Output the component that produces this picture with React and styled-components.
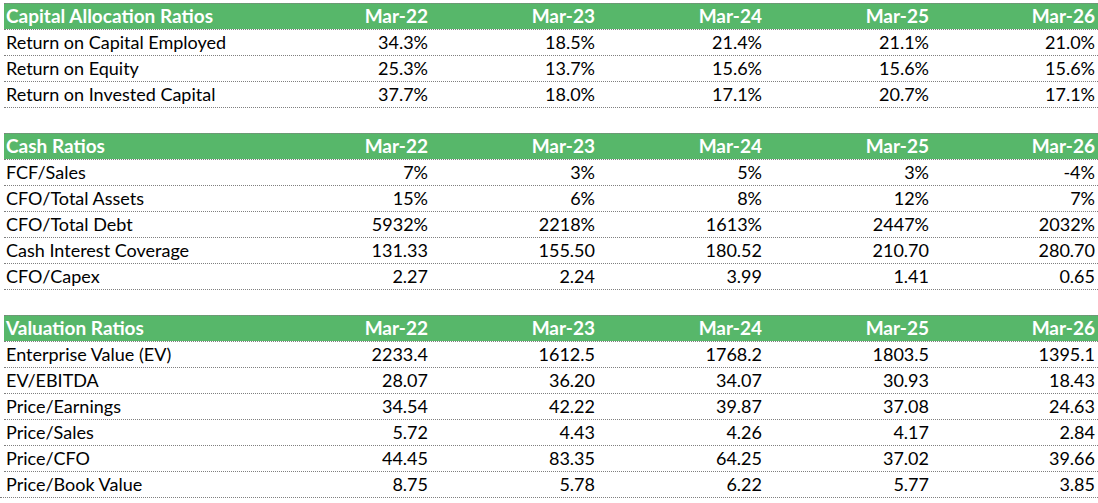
import React from "react";
import styled, { createGlobalStyle } from "styled-components";

const GlobalStyle = createGlobalStyle`
  html, body {
    margin: 0;
    padding: 0;
    background: #ffffff;
  }
  body {
    font-family: Lato, "Open Sans", "Liberation Sans", sans-serif;
    color: #000000;
  }
`;

const Sheet = styled.div`
  padding: 3px 0 0 4px;
  width: 1094px;
  border-bottom: 1px dotted #7f7f7f;
`;

const Row = styled.div`
  display: grid;
  grid-template-columns: 260px 167px 167px 167px 167px 166px;
  height: 25px;
  border-top: 1px dotted #7f7f7f;
  background: ${(p) => (p.$head ? "#57b76a" : "transparent")};
  color: ${(p) => (p.$head ? "#ffffff" : "#000000")};
  font-weight: ${(p) => (p.$head ? 700 : 400)};
  font-size: ${(p) => (p.$head ? "19px" : "18px")};
`;

const Cell = styled.div`
  display: flex;
  align-items: flex-end;
  justify-content: ${(p) => (p.$label ? "flex-start" : "flex-end")};
  padding: 0 3px 3px 2px;
  line-height: 20px;
  white-space: nowrap;
`;

const years = ["Mar-22", "Mar-23", "Mar-24", "Mar-25", "Mar-26"];

const sections = [
  {
    title: "Capital Allocation Ratios",
    rows: [
      ["Return on Capital Employed", "34.3%", "18.5%", "21.4%", "21.1%", "21.0%"],
      ["Return on Equity", "25.3%", "13.7%", "15.6%", "15.6%", "15.6%"],
      ["Return on Invested Capital", "37.7%", "18.0%", "17.1%", "20.7%", "17.1%"],
    ],
  },
  {
    title: "Cash Ratios",
    rows: [
      ["FCF/Sales", "7%", "3%", "5%", "3%", "-4%"],
      ["CFO/Total Assets", "15%", "6%", "8%", "12%", "7%"],
      ["CFO/Total Debt", "5932%", "2218%", "1613%", "2447%", "2032%"],
      ["Cash Interest Coverage", "131.33", "155.50", "180.52", "210.70", "280.70"],
      ["CFO/Capex", "2.27", "2.24", "3.99", "1.41", "0.65"],
    ],
  },
  {
    title: "Valuation Ratios",
    rows: [
      ["Enterprise Value (EV)", "2233.4", "1612.5", "1768.2", "1803.5", "1395.1"],
      ["EV/EBITDA", "28.07", "36.20", "34.07", "30.93", "18.43"],
      ["Price/Earnings", "34.54", "42.22", "39.87", "37.08", "24.63"],
      ["Price/Sales", "5.72", "4.43", "4.26", "4.17", "2.84"],
      ["Price/CFO", "44.45", "83.35", "64.25", "37.02", "39.66"],
      ["Price/Book Value", "8.75", "5.78", "6.22", "5.77", "3.85"],
    ],
  },
];

function Line({ cells, head }) {
  return (
    <Row $head={head}>
      {cells.map((c, i) => (
        <Cell key={i} $label={i === 0}>
          {c}
        </Cell>
      ))}
    </Row>
  );
}

export default function App() {
  return (
    <>
      <GlobalStyle />
      <Sheet>
        {sections.map((s, si) => (
          <React.Fragment key={s.title}>
            {si > 0 && <Row />}
            <Line head cells={[s.title, ...years]} />
            {s.rows.map((r) => (
              <Line key={r[0]} cells={r} />
            ))}
          </React.Fragment>
        ))}
      </Sheet>
    </>
  );
}
